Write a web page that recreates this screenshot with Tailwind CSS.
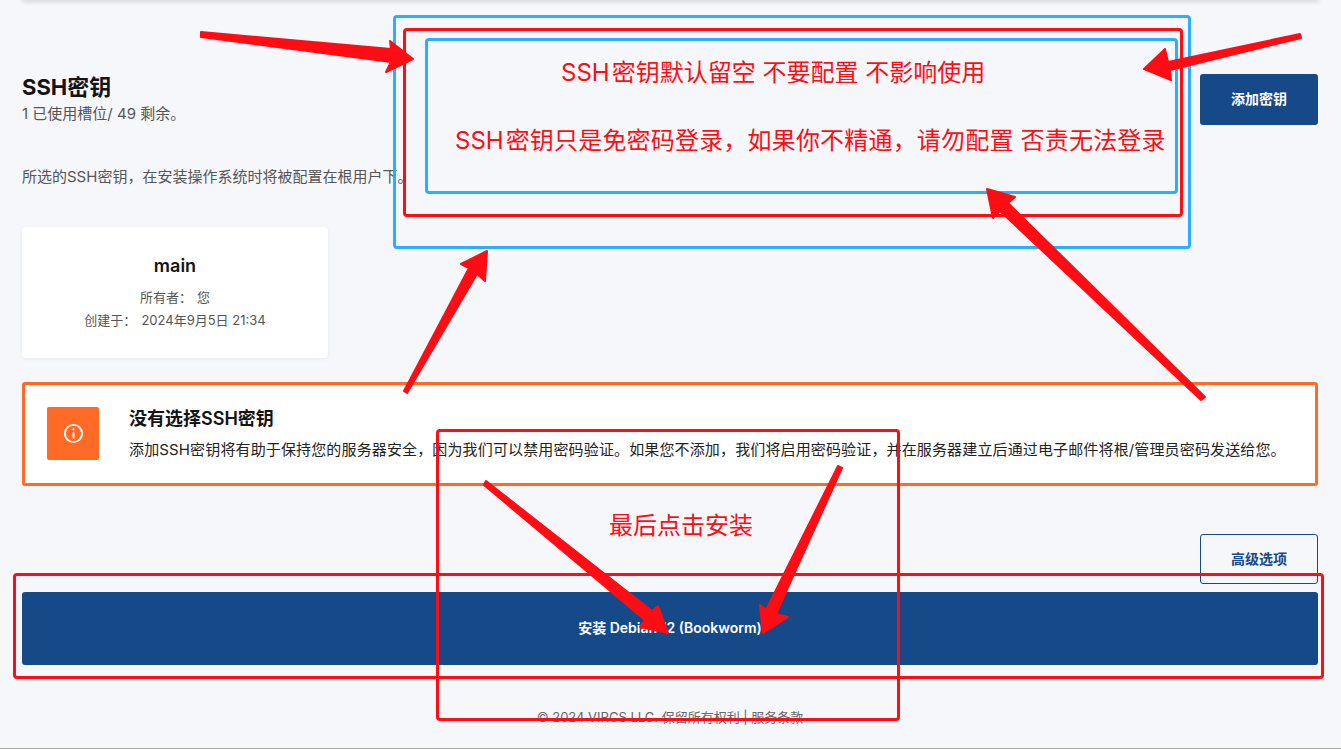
<!DOCTYPE html>
<html lang="zh-CN">
<head>
  <meta charset="UTF-8" />
  <title>SSH密钥</title>
  <script src="https://cdn.jsdelivr.net/npm/@tailwindcss/browser@4"></script>
</head>
<body class="relative h-[749px] overflow-hidden bg-[#f6f7fb] font-['Inter','Noto_Sans_CJK_SC',sans-serif] text-[#141414]">
  <!-- Card above, scrolled out of view -->
  <div class="mx-[24px] h-0 shadow-[0_0_4px_2px_rgba(0,0,0,0.14)]"></div>

  <main class="flex h-[748px] flex-col px-[23px] pl-[22px]">
    <!-- Header -->
    <section class="mt-[74px] flex items-start justify-between">
      <div>
        <h2 class="-mt-px text-[22px] leading-[28px] font-bold">SSH密钥</h2>
        <p class="mt-[3px] text-[15px] leading-[20px] text-[#555]">1 已使用槽位/ 49 剩余。</p>
      </div>
      <button class="h-[51px] w-[118px] rounded-[3px] bg-[#164987] pb-[2px] text-[14px] font-semibold text-white">添加密钥</button>
    </section>
    <p class="mt-[42px] text-[15px] leading-[20px] text-[#555]">所选的SSH密钥，在安装操作系统时将被配置在根用户下。</p>

    <!-- Key card -->
    <div class="mt-[40px] flex h-[131px] w-[306px] flex-col items-center rounded-[4px] bg-white pt-[27px] shadow-[0_1px_4px_rgba(0,0,0,0.06)]">
      <h3 class="text-[18px] leading-[24px] font-semibold">main</h3>
      <div class="mt-[10px] flex flex-col items-center gap-[5px] text-[13px] leading-[18px] text-[#555]">
        <div class="flex gap-[5px]"><span>所有者：</span><span>您</span></div>
        <div class="flex gap-[5px]"><span>创建于：</span><span>2024年9月5日 21:34</span></div>
      </div>
    </div>

    <!-- Warning -->
    <div class="mt-[24px] flex h-[104px] items-center rounded-[3px] border-[3px] border-[#ff6a27] bg-white pl-[22px]">
      <div class="mb-[2px] flex h-[53px] w-[52px] shrink-0 items-center justify-center rounded-[2px] bg-[#ff6a27]">
        <svg class="h-[23px] w-[23px]" viewBox="0 0 24 24" fill="none" stroke="#fff" stroke-width="2" stroke-linecap="round"><circle cx="12" cy="12" r="9"/><path d="M12 11.5v5"/><path d="M12 7.6v.1"/></svg>
      </div>
      <div class="ml-[30px]">
        <h4 class="text-[18px] leading-[24px] font-semibold">没有选择SSH密钥</h4>
        <p class="mt-[8px] whitespace-nowrap text-[15px] leading-[22px] tracking-[0.14px] text-[#222]">添加SSH密钥将有助于保持您的服务器安全，因为我们可以禁用密码验证。如果您不添加，我们将启用密码验证，并在服务器建立后通过电子邮件将根/管理员密码发送给您。</p>
      </div>
    </div>

    <!-- Actions -->
    <div class="mt-[48px] flex justify-end">
      <button class="h-[50px] w-[118px] rounded-[3px] border border-[#164987] pb-[2px] text-[14px] font-semibold text-[#164987]">高级选项</button>
    </div>
    <button class="mt-[8px] h-[73px] w-full shrink-0 rounded-[3px] bg-[#164987] pb-[2px] text-[14px] font-semibold text-white">安装 Debian 12 (Bookworm)</button>

    <footer class="mt-[43px] text-center text-[13px] leading-[18px] text-[#666]">© 2024 VIRCS LLC. 保留所有权利 | 服务条款</footer>
  </main>
  <div class="absolute inset-x-0 bottom-0 h-px bg-[#a8a8a8]"></div>

  <!-- Annotations drawn over the page -->
  <div class="absolute left-[393px] top-[15px] h-[234px] w-[798px] rounded-[4px] border-[3px] border-[#2aaeff]"></div>
  <div class="absolute left-[403px] top-[28px] h-[189px] w-[780px] rounded-[4px] border-[3px] border-[#ff0d14]"></div>
  <div class="absolute left-[425px] top-[38px] h-[156px] w-[753px] rounded-[4px] border-[3px] border-[#2aaeff]"></div>
  <div class="absolute left-[13px] top-[573px] h-[106px] w-[1311px] rounded-[4px] border-[3px] border-[#ff0d14]"></div>
  <div class="absolute left-[436px] top-[429px] h-[292px] w-[464px] rounded-[4px] border-[3px] border-[#ff0d14]"></div>

  <span class="absolute left-[561px] top-[55px] whitespace-nowrap text-[24px] leading-[36px] text-[#ff0d14]">SSH<span class="ml-[2px]">密钥默认留空 不要配置 不影响使用</span></span>
  <span class="absolute left-[455px] top-[123px] whitespace-nowrap text-[24px] leading-[36px] text-[#ff0d14]">SSH<span class="ml-[2px] tracking-[0.19px]">密钥只是免密码登录，如果你不精通，请勿配置 否责无法登录</span></span>
  <span class="absolute left-[609px] top-[508px] whitespace-nowrap text-[24px] leading-[36px] text-[#ff0d14]">最后点击安装</span>

  <svg class="absolute inset-0" width="1341" height="749" fill="#ff0d14" stroke="#ff0d14" stroke-width="2" stroke-linejoin="round">
    <polygon points="201,32 391,49 390,41 413,59 386,72 391,62 201,37"/>
    <polygon points="1300,34 1168,62 1165,49 1144,69 1171,80 1170,70 1301,38"/>
    <polygon points="404,391 469,268 461,264 487,251 485,281 477,274 407,393"/>
    <polygon points="1205,397 1008,203 1015,197 987,189 993,218 1000,211 1201,400"/>
    <polygon points="486,481 652,611 658,606 668,633 640,627 645,620 484,485"/>
    <polygon points="838,466 766,610 760,605 763,633 788,617 776,614 842,468"/>
  </svg>
</body>
</html>
